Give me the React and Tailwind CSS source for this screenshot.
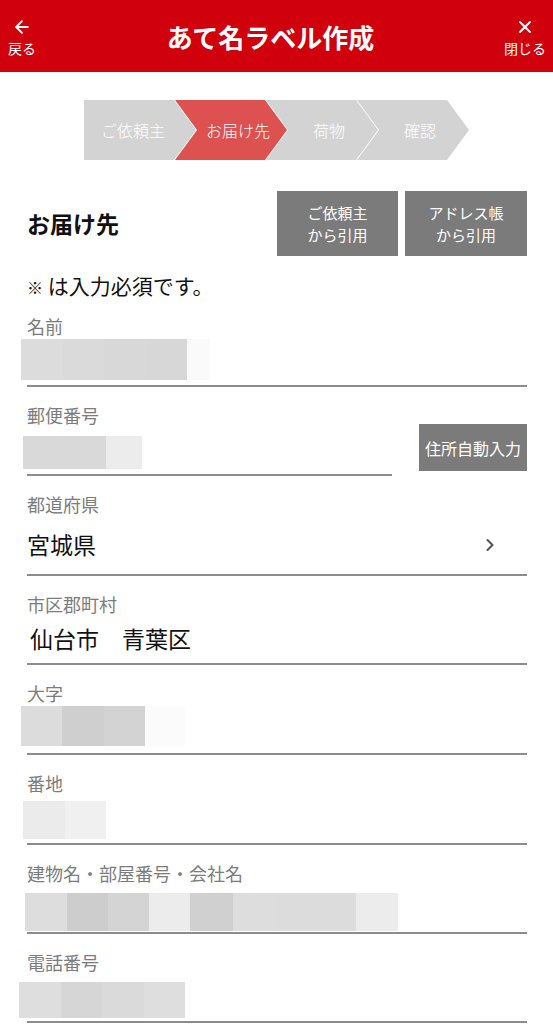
import { ArrowLeft, X, ChevronRight } from 'lucide-react';

const font = { fontFamily: '"Noto Sans CJK JP", "Noto Sans", sans-serif' };

const steps = [
  { label: 'ご依頼主', active: false, first: true },
  { label: 'お届け先', active: true },
  { label: '荷物', active: false },
  { label: '確認', active: false },
];

const Header = () => (
  <header className="h-[72px] bg-[#d0000c] text-white flex items-center justify-between px-[6px]">
    <div className="flex flex-col items-center w-[32px] pt-[2px]">
      <ArrowLeft size={20} strokeWidth={2.2} />
      <span className="text-[14px] leading-[18px] mt-[2px]">戻る</span>
    </div>
    <h1 className="text-[26px] font-bold">あて名ラベル作成</h1>
    <div className="flex flex-col items-center w-[44px] pt-[2px]">
      <X size={20} strokeWidth={2.4} />
      <span className="text-[14px] leading-[18px] mt-[2px]">閉じる</span>
    </div>
  </header>
);

const Stepper = () => (
  <div className="flex justify-center mt-[28px]">
    {steps.map((s, i) => (
      <div
        key={i}
        className={`h-[60px] w-[112px] flex items-center justify-center text-white text-[16px] font-light ${
          s.active ? 'bg-[#de5151]' : 'bg-[#d3d3d3]'
        } ${
          s.first
            ? '[clip-path:polygon(0_0,calc(100%-22px)_0,100%_50%,calc(100%-22px)_100%,0_100%)] pr-[14px]'
            : '-ml-[21px] pl-[14px] [clip-path:polygon(0_0,calc(100%-22px)_0,100%_50%,calc(100%-22px)_100%,0_100%,22px_50%)]'
        }`}
      >
        {s.label}
      </div>
    ))}
  </div>
);

const QuoteButton = ({ top, bottom, w }) => (
  <button className={`${w} h-[65px] bg-[#7b7b7b] text-white text-[15px] leading-[22px] flex flex-col items-center justify-center`}>
    <span>{top}</span>
    <span>{bottom}</span>
  </button>
);

const Mosaic = ({ cells, cls }) => (
  <div className={`flex -ml-[6px] ${cls}`}>
    {cells.map((c, i) => (
      <div key={i} className={`h-full ${c}`} />
    ))}
  </div>
);

// area height includes the 2px underline (border-box)
const Field = ({ label, children, area = 'h-[50px]' }) => (
  <div className="pt-[17px]">
    <div className="text-[18px] leading-[22px] text-[#7c7c7c]">{label}</div>
    <div className={`${area} flex flex-col border-b-2 border-[#8c8c8c]`}>{children}</div>
  </div>
);

export default function App() {
  return (
    <div className="bg-white min-h-[1024px] overflow-hidden" style={font}>
      <Header />
      <Stepper />

      <div className="px-[27px] pr-[26px]">
        <div className="flex items-center justify-between mt-[31px]">
          <h2 className="text-[23px] font-bold text-[#111]">お届け先</h2>
          <div className="flex gap-[7px]">
            <QuoteButton w="w-[121px]" top="ご依頼主" bottom="から引用" />
            <QuoteButton w="w-[122px]" top="アドレス帳" bottom="から引用" />
          </div>
        </div>

        <p className="mt-[16px] text-[21px] leading-[26px] text-[#111]">
          <span className="text-[16px] leading-none">※</span> は入力必須です。
        </p>

        <Field label="名前">
          <Mosaic
            cls="mt-[2px] h-[41px]"
            cells={['w-[42px] bg-[#dcdcdc]', 'w-[41px] bg-[#dadada]', 'w-[42px] bg-[#d8d8d8]', 'w-[41px] bg-[#d7d7d7]', 'w-[23px] bg-[#fafafa]']}
          />
        </Field>

        <div className="flex items-end justify-between">
          <div className="w-[365px]">
            <Field label="郵便番号">
              <Mosaic
                cls="mt-[10px] h-[33px] ml-[-4px]"
                cells={['w-[83px] bg-[#d9d9d9]', 'w-[36px] bg-[#ececec]']}
              />
            </Field>
          </div>
          <button className="mb-[5px] w-[108px] h-[47px] bg-[#7b7b7b] text-white text-[16px]">
            住所自動入力
          </button>
        </div>

        <Field label="都道府県" area="h-[61px]">
          <div className="h-full flex items-center justify-between">
            <span className="text-[23px] text-[#111]">宮城県</span>
            <ChevronRight size={20} strokeWidth={2.5} className="text-[#555] mr-[27px]" />
          </div>
        </Field>

        <Field label="市区郡町村">
          <div className="h-full flex items-center pl-[3px] pb-[2px]">
            <span className="text-[23px] text-[#111]">仙台市　青葉区</span>
          </div>
        </Field>

        <Field label="大字" area="h-[51px]">
          <Mosaic
            cls="mt-[2px] h-[40px]"
            cells={['w-[41px] bg-[#dcdcdc]', 'w-[42px] bg-[#cfcfcf]', 'w-[41px] bg-[#d3d3d3]', 'w-[40px] bg-[#fbfbfb]']}
          />
        </Field>

        <Field label="番地" area="h-[51px]">
          <Mosaic
            cls="mt-[7px] h-[38px] ml-[-4px]"
            cells={['w-[42px] bg-[#ebebeb]', 'w-[41px] bg-[#f0f0f0]']}
          />
        </Field>

        <Field label="建物名・部屋番号・会社名">
          <Mosaic
            cls="mt-[9px] h-[38px] ml-[-2px]"
            cells={[
              'w-[42px] bg-[#dddddd]',
              'w-[41px] bg-[#cdcdcd]',
              'w-[41px] bg-[#d4d4d4]',
              'w-[41px] bg-[#ececec]',
              'w-[43px] bg-[#d0d0d0]',
              'w-[42px] bg-[#dddddd]',
              'w-[81px] bg-[#dcdcdc]',
              'w-[42px] bg-[#ececec]',
            ]}
          />
        </Field>

        <Field label="電話番号">
          <Mosaic
            cls="mt-[9px] h-[36px] ml-[-8px]"
            cells={['w-[42px] bg-[#dedede]', 'w-[41px] bg-[#d6d6d6]', 'w-[42px] bg-[#dadada]', 'w-[41px] bg-[#dedede]']}
          />
        </Field>
      </div>
    </div>
  );
}
